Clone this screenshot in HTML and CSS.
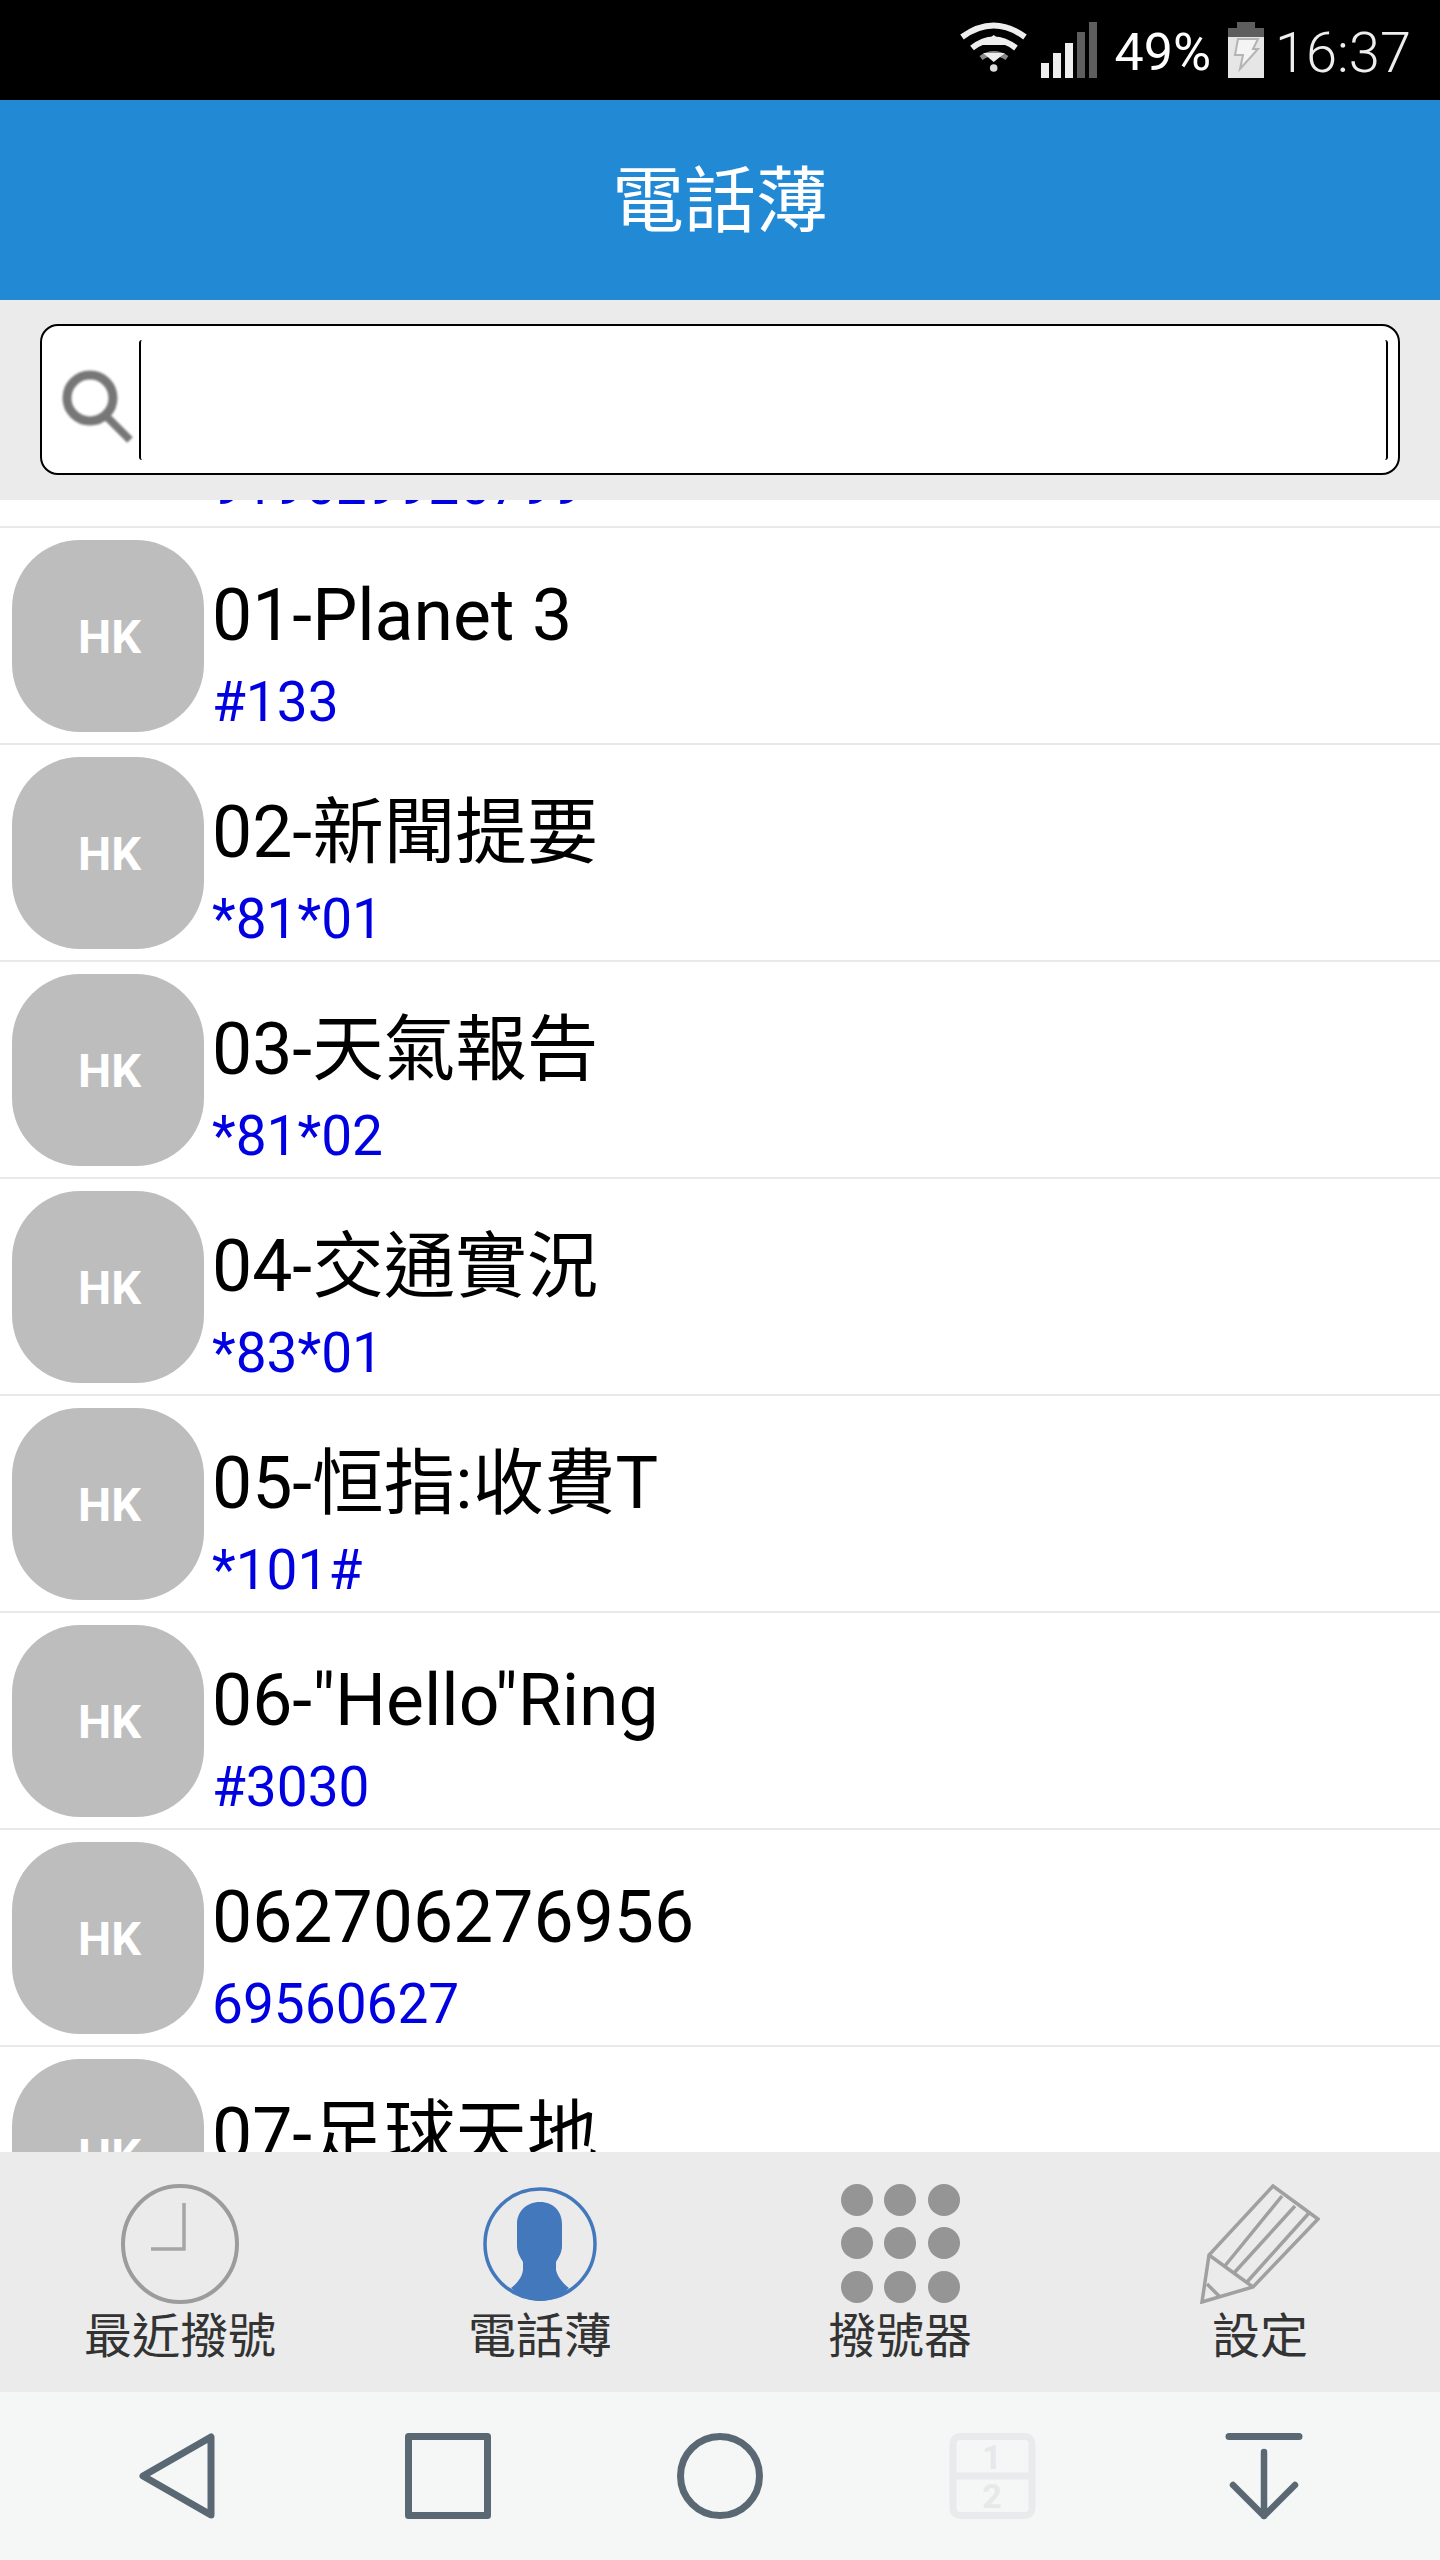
FILE: index.html
```html
<!DOCTYPE html>
<html lang="zh-Hant">
<head>
  <meta charset="UTF-8" />
  <meta name="viewport" content="width=device-width, initial-scale=1.0"/>
  <title>電話薄</title>
  <link rel="stylesheet" href="styles.css">
</head>
<body>
  <div class="app">
    <!-- Status bar -->
    <div class="status-bar">
      <svg class="icon-wifi" width="68" height="56" viewBox="0 0 68 56" fill="none">
        <path d="M2 15 Q33.7 -8 65 15" stroke="#eee" stroke-width="6"/>
        <path d="M12 26 Q33.7 9 56 26" stroke="#eee" stroke-width="6"/>
        <path d="M21 36 Q33.7 27 47 36" stroke="#8a8a8a" stroke-width="5"/>
        <polygon points="21,23 46,23 33.7,13" fill="#eee"/>
        <polygon points="23,31 45,31 33.7,40" fill="#eee"/>
        <circle cx="33.7" cy="46" r="3.8" fill="#ddd"/>
      </svg>
      <svg class="icon-signal" width="56" height="56" viewBox="0 0 56 56">
        <rect x="0" y="41" width="8" height="15" fill="#eee"/>
        <rect x="12" y="31" width="8" height="25" fill="#eee"/>
        <rect x="24" y="21" width="8" height="35" fill="#eee"/>
        <rect x="36" y="10" width="8" height="46" fill="#5e5e5e"/>
        <rect x="48" y="0" width="8" height="56" fill="#5e5e5e"/>
      </svg>
      <span class="battery-text">49%</span>
      <svg class="icon-battery" width="36" height="56" viewBox="0 0 36 56">
        <rect x="9" y="0" width="18" height="7" fill="#5e5e5e"/>
        <rect x="0" y="6" width="36" height="9" fill="#5e5e5e"/>
        <rect x="0" y="15" width="36" height="41" fill="#e6e6e6"/>
        <path d="M10 17 H30 L25 27 H30 L12 47 L15 33 H7Z" fill="#f4f4f4" stroke="#b4b4b4" stroke-width="2"/>
      </svg>
      <span class="clock-text">16:37</span>
    </div>

    <div class="title-bar">電話薄</div>

    <!-- Search -->
    <div class="search-area">
      <div class="search-box">
        <svg class="icon-search" width="96" height="96" viewBox="0 0 96 96" fill="none" stroke="#777">
          <circle cx="47" cy="40" r="23" stroke-width="9"/>
          <path d="M63 58 L87 82" stroke-width="8"/>
        </svg>
        <input type="text" class="search-input">
      </div>
    </div>

    <!-- Contact list -->
    <div class="list">
      <div class="list-scroll">
        <div class="row">
          <div class="avatar avatar-empty"></div>
          <div class="info"><div class="num num-cut">919629926799</div></div>
        </div>
        <div class="row">
          <div class="avatar">HK</div>
          <div class="info"><div class="name">01-Planet 3</div><div class="num">#133</div></div>
        </div>
        <div class="row">
          <div class="avatar">HK</div>
          <div class="info"><div class="name">02-新聞提要</div><div class="num">*81*01</div></div>
        </div>
        <div class="row">
          <div class="avatar">HK</div>
          <div class="info"><div class="name">03-天氣報告</div><div class="num">*81*02</div></div>
        </div>
        <div class="row">
          <div class="avatar">HK</div>
          <div class="info"><div class="name">04-交通實況</div><div class="num">*83*01</div></div>
        </div>
        <div class="row">
          <div class="avatar">HK</div>
          <div class="info"><div class="name">05-恒指:收費T</div><div class="num">*101#</div></div>
        </div>
        <div class="row">
          <div class="avatar">HK</div>
          <div class="info"><div class="name">06-"Hello"Ring</div><div class="num">#3030</div></div>
        </div>
        <div class="row">
          <div class="avatar">HK</div>
          <div class="info"><div class="name">062706276956</div><div class="num">69560627</div></div>
        </div>
        <div class="row">
          <div class="avatar">HK</div>
          <div class="info"><div class="name">07-足球天地</div></div>
        </div>
      </div>
    </div>

    <!-- Bottom tabs -->
    <div class="tabs">
      <div class="tab">
        <svg class="tab-icon" width="120" height="120" viewBox="0 0 120 120" fill="none">
          <ellipse cx="60" cy="60" rx="57" ry="58" stroke="#9c9c9c" stroke-width="4"/>
          <path d="M64 19 V65 H31" stroke="#a6a6a6" stroke-width="3.5"/>
        </svg>
        <span class="tab-label">最近撥號</span>
      </div>
      <div class="tab">
        <svg class="tab-icon" width="120" height="120" viewBox="0 0 120 120" fill="none">
          <circle cx="60" cy="60" r="55" stroke="#4478bd" stroke-width="3.5"/>
          <path d="M60 18 C74 18 82 28 82 40 V62 C82 68 79 73 76 78 V86 C78 94 84 100 89 104 C82 112 72 117 60 117 C48 117 38 112 31 104 C36 100 42 94 43 86 V78 C40 73 37 68 37 62 V40 C37 28 46 18 60 18Z" fill="#4478bd"/>
        </svg>
        <span class="tab-label">電話薄</span>
      </div>
      <div class="tab">
        <svg class="tab-icon" width="120" height="120" viewBox="0 0 120 120" fill="#959595">
          <circle cx="17" cy="16" r="16"/><circle cx="60" cy="16" r="16"/><circle cx="104" cy="16" r="16"/>
          <circle cx="17" cy="59" r="16"/><circle cx="60" cy="59" r="16"/><circle cx="104" cy="59" r="16"/>
          <circle cx="17" cy="103" r="16"/><circle cx="60" cy="103" r="16"/><circle cx="104" cy="103" r="16"/>
        </svg>
        <span class="tab-label">撥號器</span>
      </div>
      <div class="tab">
        <svg class="tab-icon" width="120" height="120" viewBox="0 0 120 120" fill="none" stroke="#a0a0a0" stroke-width="3.5">
          <path d="M2 118 L9 71 L73 2 L118 35 L53 103Z"/>
          <path d="M9 71 L53 103"/>
          <path d="M82 12 L24 83 M95 22 L34 89 M109 29 L47 98"/>
          <path d="M7 100 L20 113"/>
        </svg>
        <span class="tab-label">設定</span>
      </div>
    </div>

    <!-- Android nav bar -->
    <div class="nav-bar">
      <svg width="90" height="90" viewBox="0 0 90 90" fill="none" stroke="#5a6873" stroke-width="7" stroke-linejoin="round">
        <path d="M80 6 V84 L12 45Z"/>
      </svg>
      <svg width="90" height="90" viewBox="0 0 90 90" fill="none" stroke="#5a6873" stroke-width="7" stroke-linejoin="round">
        <rect x="5.5" y="5.5" width="79" height="79"/>
      </svg>
      <svg width="90" height="90" viewBox="0 0 90 90" fill="none" stroke="#5a6873" stroke-width="7">
        <circle cx="45" cy="45" r="39.5"/>
      </svg>
      <svg width="90" height="90" viewBox="0 0 90 90" fill="none" stroke="#e8eaeb" stroke-width="7">
        <rect x="6" y="5.5" width="79" height="79" rx="7"/>
        <path d="M6 45 H85"/>
        <text class="dual-num" x="45" y="38">1</text>
        <text class="dual-num" x="45" y="77">2</text>
      </svg>
      <svg width="90" height="90" viewBox="0 0 90 90" fill="none" stroke="#5a6873" stroke-width="6.5" stroke-linecap="round" stroke-linejoin="round">
        <path d="M10 5.5 H80" stroke-width="7"/>
        <path d="M45 21 V85 M14 54 L45 85 L76 54"/>
      </svg>
    </div>
  </div>
</body>
</html>
```

FILE: styles.css
```css
body { margin: 0; background: #fff; font-family: Roboto, "Noto Sans CJK TC", sans-serif; }

.app {
  display: flex;
  flex-direction: column;
  width: 1440px;
  height: 2560px;
  overflow: hidden;
}

/* Status bar */
.status-bar {
  display: flex;
  justify-content: flex-end;
  align-items: flex-start;
  height: 100px;
  box-sizing: border-box;
  padding: 22px 29px 0 0;
  background: #000;
  color: #fff;
  font-size: 52px;
  line-height: 62px;
}
.icon-signal { margin-left: 13px; }
.battery-text { margin-left: 17px; }
.icon-battery { margin-left: 17px; }
.clock-text { margin-left: 11px; color: #eee; font-size: 56px; font-weight: 300; }

.title-bar {
  height: 200px;
  box-sizing: border-box;
  padding-top: 4px;
  line-height: 196px;
  text-align: center;
  background: #2289d5;
  color: #fff;
  font-size: 72px;
}

/* Search */
.search-area {
  height: 200px;
  box-sizing: border-box;
  padding: 24px 40px 25px;
  background: #ebebeb;
}
.search-box {
  display: flex;
  align-items: center;
  height: 151px;
  box-sizing: border-box;
  padding: 0 10px 0 1px;
  background: #fff;
  border: 2px solid #000;
  border-radius: 18px;
}
.icon-search { flex: none; filter: blur(1.2px); margin-top: 12px; }
.search-input {
  flex: 1;
  height: 120px;
  box-sizing: border-box;
  padding: 0;
  background: none;
  border: none;
  border-left: 2px solid #000;
  border-right: 2px solid #000;
  border-radius: 3px;
  outline: none;
}

/* List */
.list { flex: 1; overflow: hidden; min-height: 0; }
.list-scroll { margin-top: -189px; }
.row {
  display: flex;
  height: 217px;
  box-sizing: border-box;
  padding: 12px 0 0 12px;
  border-bottom: 2px solid #e9e9e9;
}
.avatar {
  display: flex;
  justify-content: center;
  align-items: center;
  flex: none;
  width: 192px;
  height: 192px;
  box-sizing: border-box;
  padding-left: 3px;
  background: #bdbdbd;
  border-radius: 68px;
  color: #fff;
  font-size: 47px;
  font-weight: bold;
}
.avatar-empty { background: none; }
.info { padding: 36px 0 0 8px; }
.name { height: 80px; line-height: 80px; font-size: 71.5px; color: #000; white-space: nowrap; }
.num { margin-top: 11px; line-height: 70px; font-size: 55px; color: #0000e0; white-space: nowrap; }
.num-cut { margin-top: 91px; }

/* Tabs */
.tabs {
  display: grid;
  grid-template-columns: repeat(4, 1fr);
  flex: none;
  height: 240px;
  box-sizing: border-box;
  padding-top: 32px;
  background: #ebebeb;
}
.tab { display: flex; flex-direction: column; align-items: center; }
.tab-icon { filter: blur(0.5px); }
.tab-label { margin-top: 4px; line-height: 58px; font-size: 48px; color: #333; }

/* Nav bar */
.nav-bar {
  display: grid;
  grid-template-columns: repeat(5, 272px);
  justify-items: center;
  align-items: center;
  flex: none;
  height: 168px;
  padding: 0 40px;
  background: #f5f6f6;
}
.dual-num { font-size: 34px; font-weight: bold; fill: #e6e8e9; stroke: none; text-anchor: middle; }
```
